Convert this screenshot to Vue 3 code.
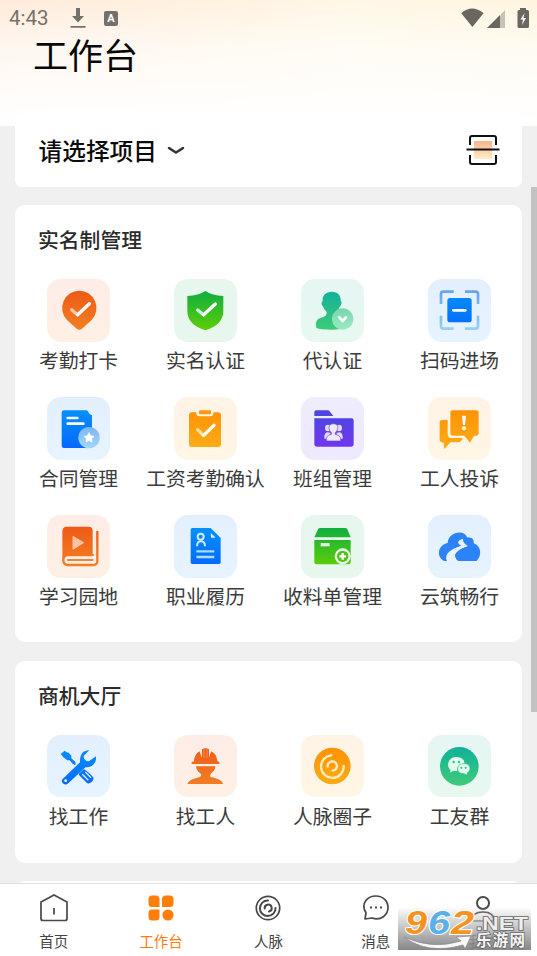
<script setup>
const manage = [
  { id: 'pin', label: '考勤打卡', tone: 'red' },
  { id: 'shield', label: '实名认证', tone: 'green' },
  { id: 'agent', label: '代认证', tone: 'teal' },
  { id: 'scan', label: '扫码进场', tone: 'blue' },
  { id: 'contract', label: '合同管理', tone: 'blue' },
  { id: 'clipboard', label: '工资考勤确认', tone: 'orange' },
  { id: 'folder', label: '班组管理', tone: 'purple' },
  { id: 'complaint', label: '工人投诉', tone: 'orange' },
  { id: 'book', label: '学习园地', tone: 'red' },
  { id: 'resume', label: '职业履历', tone: 'blue' },
  { id: 'box', label: '收料单管理', tone: 'green' },
  { id: 'cloud', label: '云筑畅行', tone: 'blue' },
]
const business = [
  { id: 'tools', label: '找工作', tone: 'blue' },
  { id: 'worker', label: '找工人', tone: 'red' },
  { id: 'circle', label: '人脉圈子', tone: 'orange' },
  { id: 'wechat', label: '工友群', tone: 'teal' },
]
const sections = [
  { title: '实名制管理', items: manage, cls: 'first' },
  { title: '商机大厅', items: business, cls: 'second' },
]
const tabs = [
  { id: 'home', label: '首页' },
  { id: 'work', label: '工作台', active: true },
  { id: 'people', label: '人脉' },
  { id: 'msg', label: '消息' },
  { id: 'me', label: '我的' },
]
</script>

<template>
  <div class="screen">
    <svg class="defs" width="0" height="0">
      <defs>
        <linearGradient id="gRed" x1="0" y1="35" x2="0" y2="153" gradientUnits="userSpaceOnUse"><stop offset="0" stop-color="#ee5a16" /><stop offset="1" stop-color="#f37f24" /></linearGradient>
        <linearGradient id="gGreen" x1="0" y1="36" x2="0" y2="153" gradientUnits="userSpaceOnUse"><stop offset="0" stop-color="#0eae41" /><stop offset="1" stop-color="#5dce05" /></linearGradient>
        <linearGradient id="gTeal" x1="0" y1="36" x2="0" y2="153" gradientUnits="userSpaceOnUse"><stop offset="0" stop-color="#10b199" /><stop offset="1" stop-color="#3fcb78" /></linearGradient>
        <linearGradient id="gBlue" x1="0" y1="40" x2="0" y2="153" gradientUnits="userSpaceOnUse"><stop offset="0" stop-color="#0590fc" /><stop offset="1" stop-color="#0568fc" /></linearGradient>
        <linearGradient id="gCorner" x1="0" y1="38" x2="0" y2="150" gradientUnits="userSpaceOnUse"><stop offset="0" stop-color="#65a4ee" /><stop offset="1" stop-color="#93cff6" /></linearGradient>
        <linearGradient id="gOrange" x1="0" y1="38" x2="0" y2="153" gradientUnits="userSpaceOnUse"><stop offset="0" stop-color="#ff9204" /><stop offset="1" stop-color="#fdac18" /></linearGradient>
        <linearGradient id="gPurple" x1="0" y1="40" x2="0" y2="149" gradientUnits="userSpaceOnUse"><stop offset="0" stop-color="#4848df" /><stop offset="1" stop-color="#7036ee" /></linearGradient>
        <linearGradient id="gBadge" x1="0" y1="0" x2="0" y2="1"><stop offset="0" stop-color="#78b8f4" /><stop offset="1" stop-color="#a5d6fa" /></linearGradient>
        <linearGradient id="gMint" x1="0" y1="0" x2="0" y2="1"><stop offset="0" stop-color="#78d5b0" /><stop offset="1" stop-color="#9ceac0" /></linearGradient>
        <linearGradient id="gScan" x1="0" y1="0" x2="0" y2="1"><stop offset="0" stop-color="#f7b58c" /><stop offset="1" stop-color="#ffedc8" /></linearGradient>
      </defs>
    </svg>

    <header class="header">
      <div class="status">
        <span class="time">4:43</span>
        <svg class="dl" width="16" height="21" viewBox="0 0 16 21"><path d="M6 0h4v8h4l-6 6.500L2 8h4zM.5 18h15v1.700H.5z" fill="#74716c" /></svg>
        <span class="abox">A</span>
        <svg class="signals" width="68" height="22" viewBox="0 0 68 22">
          <path d="M.3 5.200Q11-4 22.500 5.200L11.400 19z" fill="#6a6760" />
          <path d="M39 7.500L44 2v18h-5z" fill="#c5c2ba" /><path d="M26 20L39 7v13z" fill="#6a6760" />
          <path d="M59 0h6v2h1.500q1.500 0 1.500 1.500v15q0 1.500-1.500 1.500h-8.500q-1.500 0-1.500-1.500v-15Q56.500 2 58 2h1z" fill="#6a6760" /><path d="M63.500 5l-4 6.500h2.500l-1 5.500 4-7H62.500z" fill="#fff" />
        </svg>
      </div>
      <h1>工作台</h1>
    </header>

    <main class="content">
      <div class="project">
        <span>请选择项目</span>
        <svg class="chev" width="18" height="10" viewBox="0 0 18 10"><path d="M2 3q3 2.200 7 4.500Q13 5.200 16 3" fill="none" stroke="#333" stroke-width="2.500" stroke-linecap="round" /></svg>
        <svg class="scanbtn" width="34" height="32" viewBox="0 0 34 32">
          <rect x="8" y="7" width="18" height="18" fill="url(#gScan)" />
          <path d="M4 11V4q0-2 2-2h22q2 0 2 2v7M4 21v7q0 2 2 2h22q2 0 2-2v-7M.5 15.500h33" fill="none" stroke="#111" stroke-width="2" />
        </svg>
      </div>

      <section v-for="s in sections" :key="s.title" class="card" :class="s.cls">
        <h2>{{ s.title }}</h2>
        <div class="grid">
          <div v-for="i in s.items" :key="i.id" class="item">
            <div class="tile" :class="i.tone">
              <svg viewBox="0 0 189 189" width="63" height="63">
                <g v-if="i.id === 'pin'">
                  <path d="M97 35A52 52 0 0 1 134 123L105 149Q97 155 89 149L60 123A52 52 0 0 1 97 35Z" fill="url(#gRed)" />
                  <path d="M74 92L91 107" stroke="#fac6a3" stroke-width="10" stroke-linecap="round" /><path d="M92 107L127 74" stroke="#fff" stroke-width="10" stroke-linecap="round" />
                </g>
                <g v-else-if="i.id === 'shield'">
                  <path d="M94 36Q114 50 148 51V97Q148 137 94 154Q40 137 40 97V51Q74 50 94 36Z" fill="url(#gGreen)" />
                  <path d="M71 93L88 107" stroke="#c2f1e4" stroke-width="10" stroke-linecap="round" /><path d="M89 107L124 75" stroke="#fff" stroke-width="10" stroke-linecap="round" />
                </g>
                <g v-else-if="i.id === 'agent'">
                  <path d="M92 38C112 38 120 51 119 65C124 68 121 79 116 83Q113 92 107 97V110L132 123V144Q120 152 92 152Q58 152 46 147Q40 120 60 116Q78 113 77 99Q68 91 66 82Q58 75 65 65C63 49 76 38 92 38Z" fill="url(#gTeal)" />
                  <circle cx="125" cy="120" r="32" fill="url(#gMint)" /><path d="M115 115L125 126L135 115" class="stroke white" stroke-width="8" />
                </g>
                <g v-else-if="i.id === 'scan'">
                  <path d="M39 75V45Q39 38 46 38H77M111 38H143Q150 38 150 45V75M39 110V142Q39 149 46 149H77M111 149H143Q150 149 150 142V110" fill="none" stroke="url(#gCorner)" stroke-width="8" />
                  <rect x="58" y="57" width="73" height="73" rx="8" fill="url(#gBlue)" /><path d="M76 94H112" class="stroke white" stroke-width="8" />
                </g>
                <g v-else-if="i.id === 'contract'">
                  <path d="M51 40H118Q122 40 124 45Q126 52 135 55V153H51Q44 153 44 146V48Q44 40 51 40Z" fill="url(#gBlue)" />
                  <path d="M62 63H91M62 80H109" class="stroke white" stroke-width="8" />
                  <circle cx="126" cy="122" r="32" fill="url(#gBadge)" /><path d="M126 107L131 116L141 118L134 125L135 135L126 131L117 135L118 125L111 118L121 116Z" fill="#fff" stroke="#fff" stroke-width="2" stroke-linejoin="round" />
                </g>
                <g v-else-if="i.id === 'clipboard'">
                  <rect x="45" y="46" width="96" height="104" rx="9" fill="url(#gOrange)" /><rect x="67" y="33" width="51" height="25" rx="9" fill="#fff4e3" /><rect x="75" y="40" width="36" height="12" rx="4" fill="#ff9709" />
                  <path d="M71 98L88 115" stroke="#ffe0a4" stroke-width="10" stroke-linecap="round" /><path d="M89 115L120 85" stroke="#fff" stroke-width="10" stroke-linecap="round" />
                </g>
                <g v-else-if="i.id === 'folder'">
                  <path d="M46 40H80Q84 40 87 44L97 57H40V46Q40 40 46 40Z" fill="url(#gPurple)" /><path d="M40 64H152Q158 64 158 71V142Q158 149 151 149H47Q40 149 40 142Z" fill="url(#gPurple)" />
                  <g fill="#e5ddff"><ellipse cx="81" cy="93" rx="9" ry="10" /><ellipse cx="114" cy="93" rx="9" ry="10" /><path d="M70 122Q69 110 78 106L88 107V125H70ZM125 122Q126 110 117 106L107 107V125H125Z" /></g>
                  <path d="M97 80C108 80 111 87 110 94Q109 103 103 107V112Q122 116 119 132H76Q73 116 91 112V107Q85 103 84 94C83 87 87 80 97 80Z" fill="#efeaff" stroke="#673de8" stroke-width="2" />
                </g>
                <g v-else-if="i.id === 'complaint'">
                  <path d="M43 69H59V110Q59 123 70 123H104Q99 136 91 136H67L50 156Q47 152 47 137Q35 136 35 128V77Q35 69 43 69Z" fill="url(#gOrange)" />
                  <path d="M74 40H145Q152 40 152 47V109Q152 116 145 116H138L126 137L109 116H75Q67 116 67 109V47Q67 40 74 40Z" fill="url(#gOrange)" />
                  <path d="M102 56H114L111 84H105Z" fill="#fff" /><circle cx="108" cy="94" r="6" fill="#fff" />
                </g>
                <g v-else-if="i.id === 'book'">
                  <path d="M60 35H125Q137 35 137 47V122H64Q46 122 46 141V50Q46 35 60 35Z" fill="url(#gRed)" />
                  <path d="M137 120H63Q49 120 49 135Q49 150 63 150H139Q151 150 151 138V51" fill="none" stroke="url(#gRed)" stroke-width="7" stroke-linecap="round" />
                  <path d="M137 127H62Q54 127 54 135Q54 143 62 143H140V127Z" fill="#fff1e5" /><path d="M63 135H137" stroke="#f48336" stroke-width="6" stroke-linecap="round" />
                  <path d="M78 64L110 83L78 103Z" fill="#fbc3a3" stroke="#fbc3a3" stroke-width="3" stroke-linejoin="round" />
                </g>
                <g v-else-if="i.id === 'resume'">
                  <path d="M55 39H110L140 69V142Q140 147 135 147H55Q50 147 50 142V44Q50 39 55 39Z" fill="url(#gBlue)" /><path d="M110 53L125 68H111Z" fill="#d8efff" />
                  <g fill="none" stroke="#d0eaff" stroke-width="6"><circle cx="80" cy="65" r="9" /><path d="M69 94Q69 79 81 79Q93 79 93 94" /></g><path d="M67 109H121M67 126H121" stroke="#a9dcff" stroke-width="7" />
                </g>
                <g v-else-if="i.id === 'box'">
                  <path d="M57 39H132Q137 39 139 43L149 67H40L51 43Q53 39 57 39ZM40 75H149V142Q149 148 143 148H46Q40 148 40 142Z" fill="url(#gGreen)" /><rect x="59" y="84" width="27" height="10" fill="#dfffe0" />
                  <circle cx="125" cy="124" r="24" fill="#e8f7ee" /><circle cx="125" cy="124" r="17" fill="#4fc214" /><path d="M125 114V134M115 124H135" stroke="#fff" stroke-width="7" />
                </g>
                <g v-else-if="i.id === 'cloud'">
                  <path d="M50 138C25 130 27 90 59 84C61 49 110 43 117 67C136 67 138 76 137 85C160 91 163 124 145 138H91C68 130 83 103 120 94C112 88 104 82 105 71C87 77 88 85 101 92C67 103 51 118 57 138Z" fill="#2b83f7" />
                  <path d="M57 138C48 115 67 103 101 92C87 85 87 78 106 71C94 79 105 84 119 93C86 103 76 110 83 128Q86 136 93 138Z" fill="#e8f3ff" />
                  <path d="M93 138C76 132 78 108 120 94L143 103L145 138Z" fill="#2b83f7" />
                </g>
                <g v-else-if="i.id === 'tools'" fill="url(#gBlue)">
                  <path d="M41 57L53 47Q60 53 65 53L73 62V70L83 79Q88 84 84 91L77 86L68 76H61L49 67Q46 62 41 57Z" />
                  <path d="M47 132L99 82C98 57 108 46 127 46L112 61Q107 69 115 75Q122 83 131 75L147 64C149 85 135 98 115 97L64 145Q55 152 48 145Q41 139 47 132Z" /><circle cx="56" cy="137" r="4" fill="#fff" />
                  <path d="M95 117L110 103Q115 102 138 126Q143 132 133 142Q124 148 119 143L98 122Q95 119 95 117Z" /><path d="M115 111L132 128M106 118L124 136" stroke="#d9efff" stroke-width="4" />
                </g>
                <g v-else-if="i.id === 'worker'" fill="url(#gRed)">
                  <path d="M53 87V80H59Q61 58 77 49L83 69L84 43Q94 37 105 43V69L111 49Q128 57 130 77L136 82V87Z" /><path d="M90 40V69M99 40V69" stroke="#fca46e" stroke-width="2" />
                  <path d="M66 94H124Q124 106 112 114Q106 120 109 126C132 130 146 137 147 147H40Q42 134 78 126Q85 120 78 114Q67 107 66 94Z" />
                </g>
                <g v-else-if="i.id === 'circle'">
                  <circle cx="94" cy="93" r="55" fill="url(#gOrange)" /><g fill="none" stroke="#ffedbd" stroke-width="7" stroke-linecap="round"><path d="M91 61A34 34 0 1 0 128 93" /><path d="M80 95A14 14 0 1 1 95 107" /></g>
                </g>
                <g v-else>
                  <circle cx="94" cy="94" r="58" fill="url(#gTeal)" /><g fill="#e4ffed"><path d="M84 66C107 66 113 82 107 89Q86 87 87 109L76 107L67 113V104C53 92 62 66 84 66Z" /><path d="M107 86C126 84 133 105 118 113V121L108 116C81 117 84 85 107 86Z" stroke="#27bd88" stroke-width="2" /></g><g fill="#27bd88"><circle cx="77" cy="81" r="3.500" /><circle cx="93" cy="81" r="3.500" /><circle cx="100" cy="98" r="3" /><circle cx="113" cy="98" r="3" /></g>
                </g>
              </svg>
            </div>
            <span class="label">{{ i.label }}</span>
          </div>
        </div>
      </section>
      <div class="card last"></div>
    </main>

    <nav class="tabs">
      <div v-for="t in tabs" :key="t.id" class="tab" :class="{ active: t.active }">
        <svg width="30" height="30" viewBox="0 0 30 30" fill="none" stroke="#484848" stroke-width="1.700">
          <path v-if="t.id === 'home'" d="M2 9L15 2L28 9V25.500Q28 27.500 26 27.500H4Q2 27.500 2 25.500ZM15 15V21.500" />
          <g v-else-if="t.id === 'work'" fill="#ff7d0b" stroke="none"><path d="M6 2.500h4q3.500 0 3.500 3.500v8H6q-3.500 0-3.500-3.500V6Q2.500 2.500 6 2.500M20 2.500h4q3.500 0 3.500 3.500v4.500q0 3.500-3.500 3.500h-8V6q0-3.500 4-3.500M6 16.500h7.500V24q0 3.500-3.500 3.500H6q-3.500 0-3.500-3.500v-4q0-3.500 3.500-3.500" /><circle cx="22" cy="22" r="5.600" /></g>
          <g v-else-if="t.id === 'people'"><circle cx="15" cy="15" r="11.700" /><path d="M15 7.500A7.800 7.800 0 1 0 22.500 15M11.700 15.500A3.500 3.500 0 1 1 16 18.500" stroke-width="2" stroke-linecap="round" /></g>
          <g v-else-if="t.id === 'msg'"><path d="M4 26L5 20C-1 10 7 3 15 3C22 3 27 8 27 14.500C27 22 20 28 11 25Z" stroke-linejoin="round" /><path d="M9 14.500h2M14 14.500h2M19 14.500h2" stroke-width="2.200" /></g>
          <g v-else><circle cx="15" cy="10" r="6" stroke-width="2" /><path d="M4 28Q4 19 15 19Q26 19 26 28Z" /></g>
        </svg>
        <span>{{ t.label }}</span>
      </div>
    </nav>

    <div class="scrollbar"></div>

    <div class="mark">
      <svg width="133" height="43" viewBox="0 2 133 43">
        <g class="num"><text x="7" y="28.500" textLength="22" lengthAdjust="spacingAndGlyphs" fill="#f6931f">9</text><text x="30" y="28.500" textLength="22" lengthAdjust="spacingAndGlyphs" fill="#5ab0e8">6</text><text x="53" y="28.500" textLength="23" lengthAdjust="spacingAndGlyphs" fill="#f6931f">2</text></g>
        <path d="M6 32Q34 45 63 36L58 32L73 31L67 44L65 40Q30 50 6 32Z" fill="#f7f7f7" stroke="#888" stroke-width=".7" />
        <text class="net" x="78" y="24.500" textLength="52" lengthAdjust="spacingAndGlyphs">.NET</text>
        <text class="cn" x="78" y="40.500" textLength="49">乐游网</text>
      </svg>
    </div>
  </div>
</template>

<style>
body { margin: 0; overflow: hidden; }
</style>
<style scoped>
.screen { position: relative; width: 537px; height: 956px; overflow: hidden; display: flex; flex-direction: column; background: #f0f0f0; font-family: "Noto Sans CJK SC", "Noto Sans", sans-serif; color: #333; }
.defs { position: absolute; }
.header { flex: none; height: 126px; background: linear-gradient(180deg, transparent 0, rgba(255,255,255,.6) 38%, rgba(255,255,255,.85) 75%, #fff 100%), linear-gradient(90deg, #ffebda 0, #fff1df 35%, #fff7e6 65%, #fff5df 100%); }
.status { display: flex; align-items: center; height: 37px; padding: 0 9px; font: 20.500px/37px Roboto, sans-serif; color: #74716c; }
.time { width: 41px; }
.dl { margin-left: 20px; }
.abox { width: 14px; height: 15px; margin-left: 18px; background: #74716c; color: #fff; font: bold 11px/15px Roboto, sans-serif; text-align: center; border-radius: 2px; }
.signals { margin-left: auto; margin-right: -1px; }
h1 { margin: -9px 0 0 33px; font-size: 35px; line-height: 52px; font-weight: 400; color: #080808; }
.content { flex: 1; min-height: 0; padding: 0 15px; overflow: hidden; margin-top: -13px; }
.project { height: 74px; box-sizing: border-box; padding: 0 22px 1px 23.500px; display: flex; align-items: center; background: #fff; border-radius: 7px; font-size: 23.700px; font-weight: 500; color: #0b0b0b; }
.chev { margin-left: 10px; }
.scanbtn { margin-left: auto; }
.card { margin-top: 18px; background: #fff; border-radius: 10px; box-sizing: border-box; overflow: hidden; }
.first { height: 437px; }
.second { height: 202.500px; margin-top: 18.500px; }
.last { height: 80px; }
h2 { margin: 0; padding: 19px 0 1px 23px; font-size: 20.800px; line-height: 30px; font-weight: 500; color: #2b2b2b; }
.grid { display: grid; grid-template-columns: repeat(4, 127px); grid-auto-rows: 118px; padding-top: 24px; }
.item { display: flex; flex-direction: column; align-items: center; }
.tile { width: 63px; height: 62.500px; border-radius: 14px; overflow: hidden; }
.tile svg { display: block; }
.red { background: linear-gradient(#feede7, #fff0e5); }
.green { background: #e7f7ed; }
.teal { background: linear-gradient(#e5f6f4, #e7f9ef); }
.blue { background: linear-gradient(#e4effe, #e6f4ff); }
.orange { background: linear-gradient(#fff3e5, #fff6e5); }
.purple { background: linear-gradient(#eeecfd, #efe9fd); }
.stroke { fill: none; stroke-linecap: round; stroke-linejoin: round; }
.white { stroke: #fff; }
.label { margin-top: 3.500px; font-size: 19.800px; line-height: 30px; white-space: nowrap; color: #3b3b3b; }
.tabs { flex: none; height: 73px; box-sizing: border-box; border-top: 1px solid #dedede; background: #fff; display: grid; grid-template-columns: repeat(5, 107.400px); }
.tab { display: flex; flex-direction: column; align-items: center; padding-top: 9px; font-size: 14.500px; line-height: 22px; color: #444; }
.tab span { margin-top: 7px; }
.tab.active { color: #ff7d0b; }
.scrollbar { position: absolute; right: 0; top: 187px; width: 6px; height: 525px; background: #c2c2c2; }
.mark { position: absolute; left: 398px; top: 907px; width: 133px; height: 43px; background: linear-gradient(180deg, rgba(255,255,255,0), rgba(190,190,190,.75) 40%, rgba(125,125,125,.92)); }
.mark svg { display: block; overflow: visible; }
.num text { font: italic bold 34px "Liberation Sans", sans-serif; stroke: #fff; stroke-width: 2px; paint-order: stroke; }
.net { font: bold 19px "Liberation Sans", sans-serif; fill: #eee; stroke: #666; stroke-width: 1.500px; paint-order: stroke; }
.cn { font: bold 15.500px "Noto Sans CJK SC", sans-serif; fill: #f6f6f6; stroke: #666; stroke-width: 1.500px; paint-order: stroke; }
</style>
